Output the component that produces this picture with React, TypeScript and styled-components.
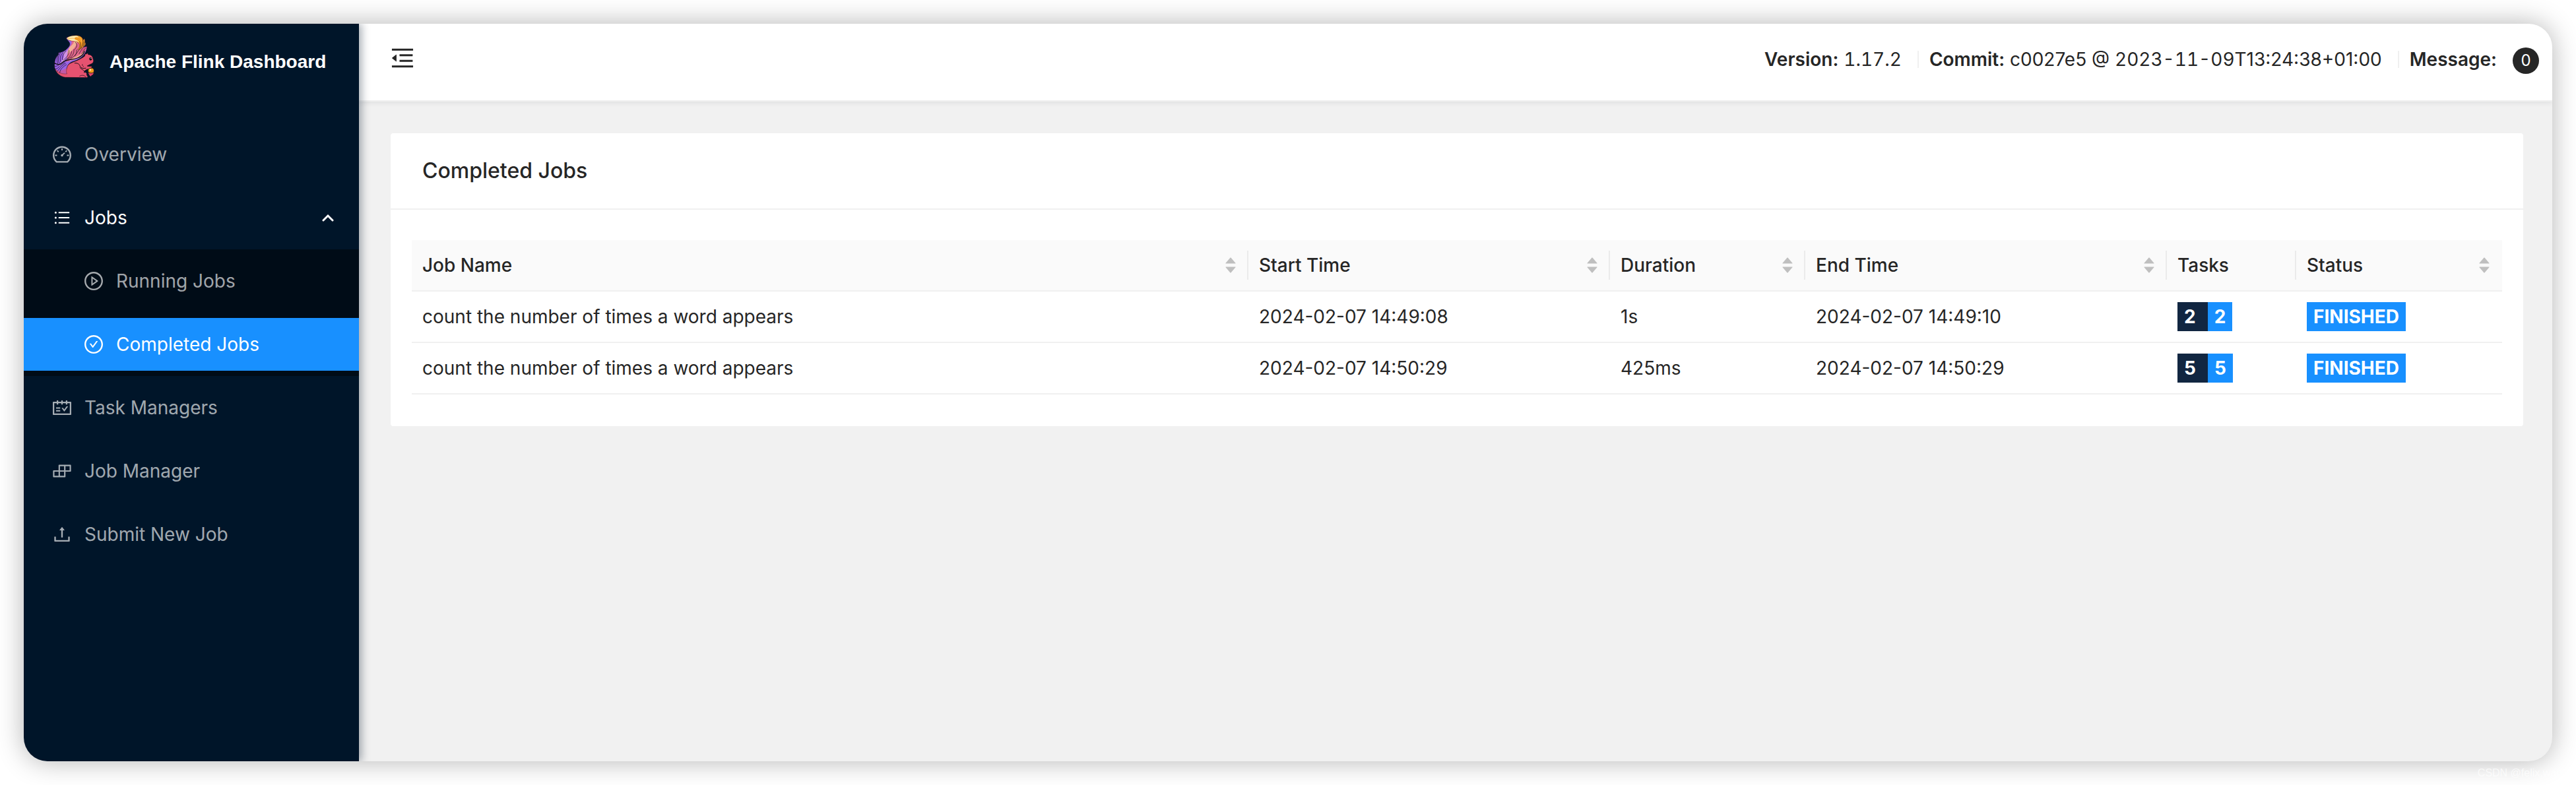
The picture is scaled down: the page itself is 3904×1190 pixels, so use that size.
import React from "react";
import styled, { createGlobalStyle } from "styled-components";
import {
  AiFillCaretDown,
  AiFillCaretUp,
  AiOutlineBars,
  AiOutlineBuild,
  AiOutlineCheckCircle,
  AiOutlineDashboard,
  AiOutlineMenuFold,
  AiOutlinePlayCircle,
  AiOutlineSchedule,
  AiOutlineUpload,
} from "react-icons/ai";

const GlobalStyle = createGlobalStyle`
  *, *::before, *::after { box-sizing: border-box; }
  body {
    margin: 0;
    background: #fff;
    color: #262626;
    font-family: Inter, "Liberation Sans", sans-serif;
    font-size: 28px;
    line-height: 44px;
  }
  button { font: inherit; color: inherit; background: none; border: 0; padding: 0; cursor: pointer; }
  a { color: inherit; text-decoration: none; }
  svg { display: block; flex: none; }
`;

const Page = styled.div`
  position: relative;
  min-height: 100vh;
  padding: 36px;
  display: flex;
`;

const Frame = styled.div`
  flex: 1;
  display: flex;
  border-radius: 36px;
  overflow: hidden;
  background: #f1f1f1;
  box-shadow: 0 0 40px rgba(0, 0, 0, 0.3);
`;

const Sidebar = styled.aside`
  position: relative;
  z-index: 2;
  width: 508px;
  flex: none;
  background: #001529;
  box-shadow: 4px 0 12px rgba(0, 21, 41, 0.35);
`;

const Brand = styled.a`
  display: flex;
  align-items: flex-start;
  gap: 20px;
  height: 150px;
  padding: 16px 0 0 44px;
`;

const BrandName = styled.h1`
  margin: 20px 0 0;
  color: #fff;
  font: 700 28px/44px "Liberation Sans", Arial, sans-serif;
  white-space: nowrap;
`;

const Menu = styled.ul`
  list-style: none;
  margin: 0;
  padding: 0;
`;

const SubMenu = styled(Menu)`
  background: #000c17;
  display: flow-root;
`;

const MenuEntry = styled.li`
  display: flow-root;
`;

const MenuRow = styled.a<{ $nested?: boolean; $tone?: "open" | "selected" }>`
  display: flex;
  align-items: center;
  gap: 20px;
  width: 100%;
  height: 80px;
  margin: 8px 0;
  padding: 0 38px 0 ${(p) => (p.$nested ? 92 : 44)}px;
  text-align: left;
  color: ${(p) => (p.$tone ? "#fff" : "rgba(255, 255, 255, 0.65)")};
  background: ${(p) => (p.$tone === "selected" ? "#1890ff" : "transparent")};
`;

const RowLabel = styled.span`
  flex: 1;
`;

const Column = styled.div`
  flex: 1;
  min-width: 0;
`;

const TopBar = styled.header`
  position: relative;
  z-index: 1;
  display: flex;
  align-items: center;
  justify-content: space-between;
  height: 118px;
  padding: 0 20px 12px 48px;
  background: #fff;
  border-bottom: 2px solid #f0f0f0;
  box-shadow: 0 2px 8px rgba(0, 21, 41, 0.08);
`;

const BuildInfo = styled.div`
  display: flex;
  align-items: center;
  padding-top: 4px;
  white-space: nowrap;
`;

const Tabular = styled.span`
  font-variant-numeric: tabular-nums;
`;

const Rule = styled.span`
  width: 2px;
  height: 26px;
  margin: 0 16px 0 24px;
  background: #f0f0f0;
`;

const Strong = styled.strong`
  font-weight: 600;
`;

const CountBadge = styled.button`
  width: 40px;
  height: 40px;
  margin: 4px 0 0 24px;
  border-radius: 20px;
  background: #262626;
  color: #fff;
  font-size: 24px;
  line-height: 40px;
  text-align: center;
`;

const Content = styled.main`
  padding: 48px 44px 48px 48px;
`;

const Card = styled.section`
  background: #fff;
  border-radius: 4px;
`;

const CardTitle = styled.h2`
  margin: 0;
  padding: 34px 48px;
  border-bottom: 2px solid #f0f0f0;
  font-size: 32px;
  line-height: 46px;
  font-weight: 500;
`;

const CardBody = styled.div`
  padding: 46px 32px 48px;
`;

const JobTable = styled.table`
  width: 100%;
  table-layout: fixed;
  border-collapse: separate;
  border-spacing: 0;
`;

const Col = styled.col<{ $w?: number }>`
  width: ${(p) => (p.$w ? `${p.$w}px` : "auto")};
`;

const HeadCell = styled.th`
  padding: 16px 0 16px 16px;
  background: #fafafa;
  border-bottom: 2px solid #f0f0f0;
  font-weight: 500;
  text-align: left;
`;

const headInner = `
  display: flex;
  align-items: center;
  justify-content: space-between;
  width: 100%;
  height: 44px;
  padding-right: 14px;
  border-right: 2px solid rgba(0, 0, 0, 0.06);
`;

const HeadText = styled.div`
  ${headInner}
`;

const SortButton = styled.button<{ $last?: boolean }>`
  ${headInner}
  ${(p) => (p.$last ? "border-right-color: transparent;" : "")}
`;

const Sorter = styled.span`
  display: flex;
  flex-direction: column;
  color: #bfbfbf;

  svg + svg {
    margin-top: -8px;
  }
`;

const Cell = styled.td`
  padding: 16px;
  border-bottom: 2px solid #f0f0f0;
  vertical-align: middle;
  white-space: nowrap;
`;

const Badges = styled.div`
  display: flex;
  height: 44px;
`;

const Tag = styled.span<{ $dark?: boolean }>`
  padding: 0 ${(p) => (p.$dark ? 18 : 10)}px 0 10px;
  background: ${(p) => (p.$dark ? "#112641" : "#1890ff")};
  color: #fff;
  font-weight: 700;
`;

const Watermark = styled.span`
  position: absolute;
  right: 12px;
  bottom: 8px;
  color: rgba(255, 255, 255, 0.7);
  font: 16px/20px "Liberation Sans", Arial, sans-serif;
`;

const antBox = { viewBox: "64 64 896 896", "aria-hidden": true } as const;

function SquirrelLogo() {
  return (
    <svg width="66" height="66" viewBox="6 6 198 198" role="img" aria-label="Flink">
      <path fill="#e65270" stroke="#120d14" strokeWidth="2" d="M62 202C40 197 20 182 14 156L66 158C68 146 84 138 104 130C124 122 140 114 152 104C150 98 154 94 159 96C162 90 167 92 167 98C182 98 189 108 190 121C194 127 190 138 180 141C173 144 167 147 163 150C174 152 180 150 184 153C186 158 177 163 168 164C160 165 155 168 150 174L148 180C156 176 163 183 160 190L166 200L160 203Z" />
      <path fill="#9a63e6" stroke="#120d14" strokeWidth="2" d="M70 186C46 188 22 178 15 160C13 154 13 146 14 140C15 118 22 108 32 96L31 90C42 87 56 88 76 66C90 50 82 42 68 27C60 20 86 12 112 11C134 12 143 22 143 33L150 25C153 34 152 42 156 50C154 56 150 60 146 66C152 62 158 62 162 60C160 70 160 84 150 96C140 112 118 124 98 130C80 136 72 148 69 162C67 172 67 180 70 186Z" />
      <path fill="#e2688c" d="M80 68C92 52 94 44 90 36L130 24C146 36 152 46 146 66L160 64C158 84 146 100 128 112C104 122 84 124 68 132C74 112 66 96 72 82Z" />
      <path fill="#e65270" d="M17 164C32 176 50 172 69 160L71 186C62 200 60 202 50 198C34 192 22 180 17 164Z" opacity="0.55" />
      <path fill="#f3b096" d="M84 62C94 56 104 44 102 36L116 34C116 56 104 70 92 80C84 88 78 92 76 100C72 88 76 74 84 62ZM82 122C100 108 132 106 150 80C150 96 138 108 120 115C104 121 92 124 82 128Z" />
      <path fill="#cf93e6" d="M54 88C66 86 70 80 76 74C70 94 76 104 62 122C56 134 44 140 36 156C34 140 52 124 56 108Z" />
      <path fill="#f59b23" stroke="#120d14" strokeWidth="1" d="M70 26C68 18 90 12 112 11C134 12 143 22 143 33L150 26C152 34 152 42 155 50C153 56 148 62 140 66C136 72 128 76 118 76C130 66 132 50 118 42C104 32 86 42 70 26Z" />
      <path fill="#fce8b0" d="M71 26C71 17 94 13 112 13C120 14 124 17 124 20C112 16 104 20 104 26C110 32 120 32 128 44C116 32 86 40 71 26Z" />
      <path fill="none" stroke="#f6b84c" strokeWidth="3" d="M75 24C86 28 92 22 102 25M120 16C130 20 136 28 138 40" />
      <g fill="none" stroke="#120d14" strokeLinecap="round" strokeWidth="2">
        <path d="M32 96C24 110 22 128 30 142M40 91C30 106 28 124 36 138M54 88C40 100 36 116 42 130M66 82C54 94 48 108 50 122" />
        <path d="M14 138C28 142 34 150 50 134C66 118 92 124 118 114C138 106 146 98 150 84" strokeWidth="4" />
        <path d="M16 152C30 152 40 136 58 130M20 164C34 160 40 144 60 134M26 174C34 168 44 148 64 138M38 180C38 168 50 154 68 144" />
        <path d="M64 122C78 114 90 102 92 84M74 118C92 110 104 96 102 76M56 122C70 110 80 98 80 80M88 114C106 108 118 94 114 78" />
        <path d="M108 42C122 54 114 66 104 76M128 40C138 50 132 68 122 82C116 90 110 96 106 104M143 33C146 46 140 60 134 70M150 40L146 62M146 66C138 72 132 84 126 94M156 68C148 76 146 86 138 94" />
      </g>
      <path fill="none" stroke="#c93f78" strokeWidth="4" d="M140 82C146 74 152 68 160 64" />
      <path fill="none" stroke="#120d14" strokeWidth="3" strokeLinecap="round" d="M106 137C120 136 128 142 130 152C134 160 144 162 156 160M150 174C144 166 134 164 130 158" />
      <path fill="none" stroke="#120d14" strokeWidth="2" strokeLinecap="round" d="M146 152C140 150 138 146 141 142M163 150C170 152 176 150 180 148M128 196C140 190 150 192 156 200" />
      <ellipse cx="178" cy="118" rx="6" ry="7" fill="#120d14" />
      <circle cx="180" cy="115" r="2" fill="#fff" />
      <path fill="#d94368" stroke="#120d14" strokeWidth="2" d="M167 178C174 182 184 182 192 178C194 186 188 192 182 194L178 199C172 194 167 188 167 178Z" />
      <path fill="#f59d1a" stroke="#120d14" strokeWidth="2" d="M168 178C164 168 170 159 180 160C190 158 196 166 192 179C184 184 174 183 168 178Z" />
      <circle cx="177" cy="168" r="4" fill="#ffe9a8" />
    </svg>
  );
}

function Chevron() {
  return (
    <svg width="18" height="12" viewBox="0 0 18 12" aria-hidden="true">
      <path d="M2 10L9 3L16 10" fill="none" stroke="currentColor" strokeWidth="3" strokeLinecap="round" />
    </svg>
  );
}

const columns = [
  { title: "Job Name", sortable: true },
  { title: "Start Time", width: 548, sortable: true },
  { title: "Duration", width: 296, sortable: true },
  { title: "End Time", width: 548, sortable: true },
  { title: "Tasks", width: 196, sortable: false },
  { title: "Status", width: 312, sortable: true },
];

const jobs = [
  { name: "count the number of times a word appears", start: "2024-02-07 14:49:08", duration: "1s", end: "2024-02-07 14:49:10", tasks: 2, status: "FINISHED" },
  { name: "count the number of times a word appears", start: "2024-02-07 14:50:29", duration: "425ms", end: "2024-02-07 14:50:29", tasks: 5, status: "FINISHED" },
];

export default function App() {
  return (
    <>
      <GlobalStyle />
      <Page>
        <Frame>
          <Sidebar>
            <Brand href="#/overview">
              <SquirrelLogo />
              <BrandName>Apache Flink Dashboard</BrandName>
            </Brand>
            <nav>
              <Menu>
                <MenuEntry>
                  <MenuRow href="#/overview">
                    <AiOutlineDashboard size={28} {...antBox} />
                    <RowLabel>Overview</RowLabel>
                  </MenuRow>
                </MenuEntry>
                <MenuEntry>
                  <MenuRow as="button" type="button" aria-expanded="true" $tone="open">
                    <AiOutlineBars size={28} {...antBox} viewBox="0 0 1024 1024" />
                    <RowLabel>Jobs</RowLabel>
                    <Chevron />
                  </MenuRow>
                  <SubMenu>
                    <MenuEntry>
                      <MenuRow href="#/job/running" $nested>
                        <AiOutlinePlayCircle size={28} {...antBox} />
                        <RowLabel>Running Jobs</RowLabel>
                      </MenuRow>
                    </MenuEntry>
                    <MenuEntry>
                      <MenuRow href="#/job/completed" $nested $tone="selected" aria-current="page">
                        <AiOutlineCheckCircle size={28} {...antBox} />
                        <RowLabel>Completed Jobs</RowLabel>
                      </MenuRow>
                    </MenuEntry>
                  </SubMenu>
                </MenuEntry>
                <MenuEntry>
                  <MenuRow href="#/task-manager">
                    <AiOutlineSchedule size={28} {...antBox} />
                    <RowLabel>Task Managers</RowLabel>
                  </MenuRow>
                </MenuEntry>
                <MenuEntry>
                  <MenuRow href="#/job-manager">
                    <AiOutlineBuild size={28} {...antBox} />
                    <RowLabel>Job Manager</RowLabel>
                  </MenuRow>
                </MenuEntry>
                <MenuEntry>
                  <MenuRow href="#/submit">
                    <AiOutlineUpload size={28} {...antBox} />
                    <RowLabel>Submit New Job</RowLabel>
                  </MenuRow>
                </MenuEntry>
              </Menu>
            </nav>
          </Sidebar>
          <Column>
            <TopBar>
              <button type="button" aria-label="Collapse menu">
                <AiOutlineMenuFold size={36} {...antBox} />
              </button>
              <BuildInfo>
                <span>
                  <Strong>Version:</Strong> <Tabular>1.17.2</Tabular>
                </span>
                <Rule />
                <span>
                  <Strong>Commit:</Strong> c0027e5 @ <Tabular>2023-11-09</Tabular>T13:24:38+01:00
                </span>
                <Rule />
                <Strong>Message:</Strong>
                <CountBadge type="button">0</CountBadge>
              </BuildInfo>
            </TopBar>
            <Content>
              <Card>
                <CardTitle>Completed Jobs</CardTitle>
                <CardBody>
                  <JobTable>
                    <colgroup>
                      {columns.map((c) => (
                        <Col key={c.title} $w={c.width} />
                      ))}
                    </colgroup>
                    <thead>
                      <tr>
                        {columns.map((c, i) => (
                          <HeadCell key={c.title} scope="col">
                            {c.sortable ? (
                              <SortButton type="button" $last={i === columns.length - 1}>
                                {c.title}
                                <Sorter>
                                  <AiFillCaretUp size={22} viewBox="0 0 1024 1024" aria-hidden />
                                  <AiFillCaretDown size={22} viewBox="0 0 1024 1024" aria-hidden />
                                </Sorter>
                              </SortButton>
                            ) : (
                              <HeadText>{c.title}</HeadText>
                            )}
                          </HeadCell>
                        ))}
                      </tr>
                    </thead>
                    <tbody>
                      {jobs.map((job) => (
                        <tr key={job.start}>
                          <Cell>{job.name}</Cell>
                          <Cell>{job.start}</Cell>
                          <Cell>{job.duration}</Cell>
                          <Cell>{job.end}</Cell>
                          <Cell>
                            <Badges>
                              <Tag $dark>{job.tasks}</Tag>
                              <Tag>{job.tasks}</Tag>
                            </Badges>
                          </Cell>
                          <Cell>
                            <Badges>
                              <Tag>{job.status}</Tag>
                            </Badges>
                          </Cell>
                        </tr>
                      ))}
                    </tbody>
                  </JobTable>
                </CardBody>
              </Card>
            </Content>
          </Column>
        </Frame>
        <Watermark>CSDN @felix.wang</Watermark>
      </Page>
    </>
  );
}
